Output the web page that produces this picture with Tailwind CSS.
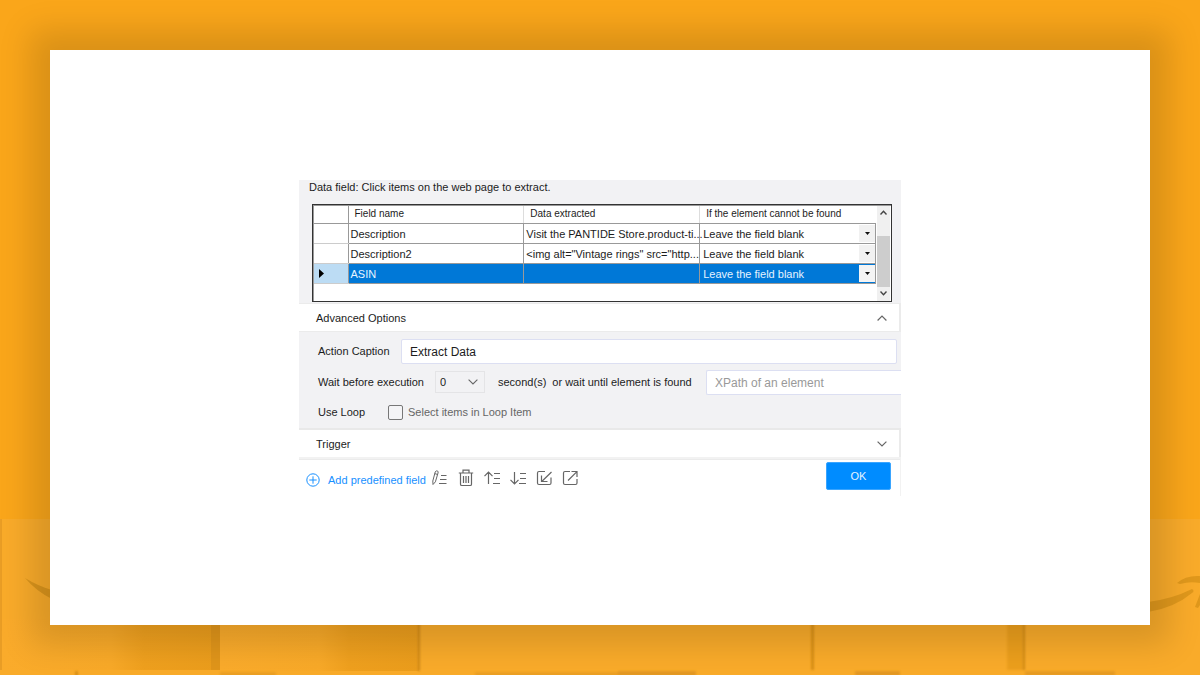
<!DOCTYPE html>
<html lang="en">
<head>
<meta charset="utf-8">
<meta name="viewport" content="width=device-width, initial-scale=1">
<title>Extract Data</title>
<script src="https://cdn.jsdelivr.net/npm/@tailwindcss/browser@4"></script>
</head>
<body class="relative flex min-h-screen flex-col overflow-x-hidden bg-[#faa61a] p-[50px] font-['Liberation_Sans',Arial,sans-serif] text-[11px] leading-[14px] text-[#1c1c1c]">
  <!-- Backdrop: faded parcels along the bottom edge -->
  <svg class="absolute inset-x-0 bottom-0 h-[156px] w-full" viewBox="0 0 1200 156" preserveAspectRatio="none" aria-hidden="true">
    <defs>
      <linearGradient id="box"><stop offset="0" stop-color="#faab2b"/><stop offset=".5" stop-color="#f8a928"/><stop offset=".65" stop-color="#efa01e"/><stop offset="1" stop-color="#eb9d1c"/></linearGradient>
      <filter id="soft"><feGaussianBlur stdDeviation="1"/></filter>
    </defs>
    <rect width="1200" height="156" fill="#f9ab2a"/>
    <rect width="2" height="151" fill="#e99d25"/>
    <rect x="2" y="100" width="218" height="51" fill="url(#box)"/>
    <rect x="211" y="100" width="9" height="51" fill="#e0951a"/>
    <rect x="220" y="100" width="199" height="52" fill="url(#box)"/>
    <g filter="url(#soft)">
      <rect x="418" y="100" width="2" height="52" fill="#cf8812"/>
      <rect x="811" y="100" width="3" height="51" fill="#d98f18"/>
      <rect x="1007" y="100" width="16" height="51" fill="#ec9f1e"/>
      <rect x="1023" y="100" width="2" height="51" fill="#d38b14"/>
      <rect x="75" y="152" width="3" height="6" fill="#d99018"/>
      <rect x="220" y="153" width="56" height="5" fill="#eb9f22"/>
      <rect x="475" y="153" width="220" height="5" fill="#eb9f22"/>
      <rect x="618" y="152" width="78" height="5" fill="#e39820"/>
      <rect x="855" y="152" width="45" height="5" fill="#e39820"/>
      <rect x="1025" y="152" width="90" height="5" fill="#e79b20"/>
    </g>
    <path d="M25 59Q38 67 52 71V80Q36 72 25 59Z" fill="#db951c"/>
    <path d="M1148 83Q1172 80 1192 70Q1195 72 1192 74Q1174 89 1148 93Z" fill="#e0981c"/>
    <path d="M1177 64Q1186 56 1200 57V64Q1190 62 1180 65ZM1200 75L1195 88L1198 89L1200 86Z" fill="#e0981c"/>
  </svg>

  <main class="relative flex flex-1 items-center justify-center bg-white shadow-[0_0_30px_20px_rgba(0,0,0,0.13)]">
    <form class="w-full max-w-[602px]" onsubmit="return false">
      <section class="bg-[#f2f2f4] pr-[9px] pl-[13px]">
        <p class="-ml-[3px] pb-[10px]">Data field: Click items on the web page to extract.</p>
        <div class="flex h-[98px] border border-[#333] bg-white shadow-[inset_1px_1px_0_#999]">
          <div class="min-w-0 flex-1 pt-px pl-px">
            <table class="w-full table-fixed border-collapse">
              <colgroup><col class="w-[34px]"><col><col><col></colgroup>
              <thead>
                <tr class="h-[18px] text-left text-[10px] leading-[14px]">
                  <th class="border-r border-b border-[#999]"></th>
                  <th class="border-r border-b border-r-[#ddd] border-b-[#999] pl-[6px] font-normal">Field name</th>
                  <th class="border-r border-b border-r-[#ddd] border-b-[#999] pl-[6px] font-normal">Data extracted</th>
                  <th class="border-b border-[#999] pl-[6px] font-normal">If the element cannot be found</th>
                </tr>
              </thead>
              <tbody>
                <tr class="h-5">
                  <td class="border-r border-b border-[#999] border-b-[#ccc]"></td>
                  <td class="border-r border-b border-[#999] pl-[2px]">Description</td>
                  <td class="border-r border-b border-[#999] pl-[2px] whitespace-nowrap">Visit the PANTIDE Store.product-ti...</td>
                  <td class="border-r border-b border-[#999]">
                    <div class="relative flex h-[19px] items-center">
                      <select aria-label="Description: if the element cannot be found" class="h-full w-full appearance-none pl-[3px] outline-none"><option>Leave the field blank</option></select>
                      <span class="pointer-events-none absolute right-0 flex h-[17px] w-4 items-center justify-center bg-[#f1f1f1]"><svg class="h-[3px] w-[5px]" viewBox="0 0 5 3"><path d="M0 0H5L2.5 3Z" fill="#111"/></svg></span>
                    </div>
                  </td>
                </tr>
                <tr class="h-5">
                  <td class="border-r border-b border-[#999] border-b-[#ccc]"></td>
                  <td class="border-r border-b border-[#999] pl-[2px]">Description2</td>
                  <td class="border-r border-b border-[#999] pl-[2px] whitespace-nowrap">&lt;img alt="Vintage rings" src="http...</td>
                  <td class="border-r border-b border-[#999]">
                    <div class="relative flex h-[19px] items-center">
                      <select aria-label="Description2: if the element cannot be found" class="h-full w-full appearance-none pl-[3px] outline-none"><option>Leave the field blank</option></select>
                      <span class="pointer-events-none absolute right-0 flex h-[17px] w-4 items-center justify-center bg-[#f1f1f1]"><svg class="h-[3px] w-[5px]" viewBox="0 0 5 3"><path d="M0 0H5L2.5 3Z" fill="#111"/></svg></span>
                    </div>
                  </td>
                </tr>
                <tr class="h-5 bg-[#0078d7] text-[#e6f3ff]">
                  <td class="border-r border-b border-[#999] border-b-[#ccc] bg-[#bcdcf4] pl-[5px]"><svg class="h-[9px] w-[5px]" viewBox="0 0 5 9"><path d="M0 0L5 4.500L0 9Z" fill="#000"/></svg></td>
                  <td class="border-r border-b border-[#999] pl-[2px]">ASIN</td>
                  <td class="border-r border-b border-[#999]"></td>
                  <td class="border-r border-b border-[#999]">
                    <div class="relative flex h-[19px] items-center">
                      <select aria-label="ASIN: if the element cannot be found" class="h-full w-full appearance-none pl-[3px] outline-none"><option>Leave the field blank</option></select>
                      <span class="pointer-events-none absolute right-0 flex h-[17px] w-4 items-center justify-center bg-[#f4f4f4]"><svg class="h-[3px] w-[5px]" viewBox="0 0 5 3"><path d="M0 0H5L2.5 3Z" fill="#111"/></svg></span>
                    </div>
                  </td>
                </tr>
              </tbody>
            </table>
          </div>
          <div class="mt-px mr-px ml-px flex w-[13px] flex-col bg-[#f0f0f0]">
            <button type="button" aria-label="Scroll up" class="flex h-[14px] items-center justify-center"><svg class="h-[5px] w-[7px]" viewBox="0 0 7 5"><path d="M.5 4.400L3.500 1.200L6.500 4.400" fill="none" stroke="#444" stroke-width="1.400"/></svg></button>
            <div class="mt-4 flex-1 bg-[#cdcdcd]"></div>
            <button type="button" aria-label="Scroll down" class="flex h-[14px] items-center justify-center"><svg class="h-[5px] w-[7px]" viewBox="0 0 7 5"><path d="M.5 .6L3.500 3.800L6.500 .6" fill="none" stroke="#444" stroke-width="1.400"/></svg></button>
          </div>
        </div>
        <div class="h-px"></div>
      </section>

      <button type="button" aria-expanded="true" class="flex h-[29px] w-full items-center justify-between border-t border-r-2 border-b border-[#ebebeb] bg-white pt-px pr-[12px] pl-[17px]">
        Advanced Options
        <svg class="h-[6px] w-[10px]" viewBox="0 0 10 6"><path d="M.6 5.500L5 1L9.400 5.500" fill="none" stroke="#666" stroke-width="1.200"/></svg>
      </button>

      <section class="flex flex-col border-b-2 border-[#e9e9e9] bg-[#f2f2f4] pt-[7px] pb-2 pl-[19px]">
        <div class="flex items-center pr-1">
          <label for="caption" class="w-[83px]">Action Caption</label>
          <input id="caption" type="text" value="Extract Data" class="h-[25px] min-w-0 flex-1 rounded-xs border border-[#dcdff2] bg-white px-[8px] pt-px text-[12px] outline-none">
        </div>
        <div class="mt-[6px] flex items-center">
          <label for="wait" class="w-[117px]">Wait before execution</label>
          <div class="relative flex h-[22px] w-[50px] items-center">
            <select id="wait" class="h-full w-full appearance-none border border-[#e4e4e6] bg-[#f2f2f4] pl-1 outline-none"><option>0</option></select>
            <svg class="pointer-events-none absolute right-[7px] h-[6px] w-[10px]" viewBox="0 0 10 6"><path d="M.6 .6L5 5L9.400 .6" fill="none" stroke="#666" stroke-width="1.100"/></svg>
          </div>
          <span class="ml-[13px]">second(s)</span>
          <label for="xpath" class="ml-[6px] flex-1 whitespace-nowrap">or wait until element is found</label>
          <input id="xpath" type="text" placeholder="XPath of an element" class="h-[25px] w-[195px] rounded-l-xs border border-r-0 border-[#dcdff2] bg-white px-[8px] pt-px text-[12px] outline-none placeholder:text-[#999]">
        </div>
        <div class="mt-[10px] flex items-center">
          <span class="w-[70px]">Use Loop</span>
          <input id="loop" type="checkbox" class="size-[15px] appearance-none rounded-xs border border-[#777] bg-[#f4f4f6] checked:bg-[#008cff]">
          <label for="loop" class="ml-[5px] text-[#666]">Select items in Loop Item</label>
        </div>
      </section>

      <button type="button" aria-expanded="false" class="flex h-[27px] w-full items-center justify-between border-r-2 border-[#ebebeb] bg-white pt-px pr-[12px] pl-[17px]">
        Trigger
        <svg class="h-[6px] w-[10px]" viewBox="0 0 10 6"><path d="M.6 .6L5 5L9.400 .6" fill="none" stroke="#666" stroke-width="1.200"/></svg>
      </button>

      <footer class="flex h-[39px] items-start border-t-2 border-r border-[#f2f2f2] pr-[9px] pl-[7px] shadow-[inset_0_1px_0_#ebebeb]">
        <button type="button" class="mt-[14px] flex items-center text-[#1890ff]">
          <svg class="mr-[8px] size-[14px]" viewBox="0 0 14 14" fill="none" stroke="#1890ff"><circle cx="7" cy="7" r="6.200"/><path d="M7 3.300V10.700M3.300 7H10.700"/></svg>
          Add predefined field
        </button>
        <div class="mt-[11px] ml-[6px] flex gap-[10px] text-[#666]">
          <button type="button" aria-label="Edit field"><svg class="size-4" viewBox="0 0 16 16" fill="none" stroke="currentColor"><path d="M1 14.500L.8 11L3.200 2Q4.200 0 5.800 1.200Q6.400 1.800 6 3L3.400 11.800ZM2.800 3.600L5.600 4.500M9 5.500H14.500M8 9.500H14.500M7 13.500H14.500"/></svg></button>
          <button type="button" aria-label="Delete field"><svg class="-mt-px h-[18px] w-4" viewBox="0 0 16 18" fill="none" stroke="currentColor" stroke-width="1.200"><path d="M.8 4H15.200M5 3.700V1.200H11V3.700M2.500 4.500V15.200Q2.500 16.500 3.800 16.500H12.200Q13.500 16.500 13.500 15.200V4.500M5.500 7V14M8 7V14M10.500 7V14"/></svg></button>
          <button type="button" aria-label="Move up"><svg class="size-4" viewBox="0 0 16 16" fill="none" stroke="currentColor" stroke-width="1.200"><path d="M4.500 14V2.500M.5 6.200L4.500 2.200L8.500 6.200M10 3.500H16M10 8.500H16M9 13.500H16"/></svg></button>
          <button type="button" aria-label="Move down"><svg class="size-4" viewBox="0 0 16 16" fill="none" stroke="currentColor" stroke-width="1.200"><path d="M4.500 2V13.500M.5 9.800L4.500 13.800L8.500 9.800M10 3.500H16M10 8.500H16M9 13.500H16"/></svg></button>
          <button type="button" aria-label="Import"><svg class="size-4" viewBox="0 0 16 16" fill="none" stroke="currentColor" stroke-width="1.200"><path d="M9 1.500H3Q1.500 1.500 1.500 3V13Q1.500 14.500 3 14.500H13.500Q15 14.500 15 13V7.500M15.500 2L6 11.300M5.500 5.500V11.500H11.500"/></svg></button>
          <button type="button" aria-label="Export"><svg class="size-4" viewBox="0 0 16 16" fill="none" stroke="currentColor" stroke-width="1.200"><path d="M8 1.500H3Q1.500 1.500 1.500 3V13Q1.500 14.500 3 14.500H13.500Q15 14.500 15 13V9M6 10.500L14.700 1.800M9.500 1.500H15V7"/></svg></button>
        </div>
        <button type="submit" class="mt-[3px] ml-auto h-7 w-[65px] rounded-xs border border-[#3aa5ff] bg-[#008cff] text-[#e6f4ff]">OK</button>
      </footer>
    </form>
  </main>
</body>
</html>
